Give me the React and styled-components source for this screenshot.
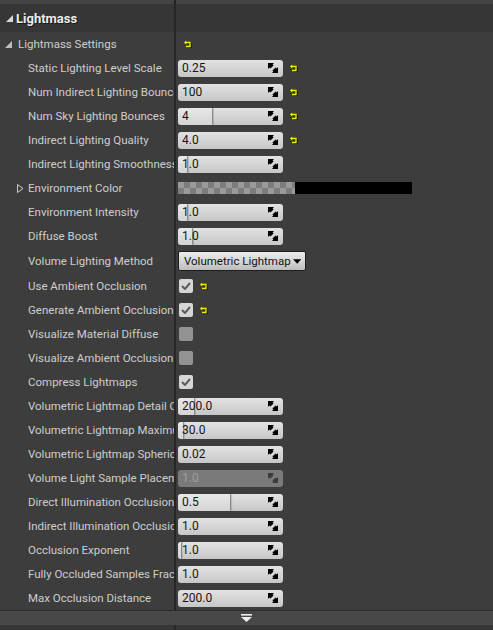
import React from "react";
import styled, { createGlobalStyle } from "styled-components";

const GlobalStyle = createGlobalStyle`
  html, body {
    margin: 0;
    padding: 0;
    background: #3d3d3d;
  }
  body {
    font-family: Roboto, "Noto Sans", "Liberation Sans", sans-serif;
  }
`;

const rows = [
  { label: "Static Lighting Level Scale", type: "num", value: "0.25", reset: true },
  { label: "Num Indirect Lighting Bounces", type: "num", value: "100", reset: true },
  { label: "Num Sky Lighting Bounces", type: "num", value: "4", fill: 34, reset: true },
  { label: "Indirect Lighting Quality", type: "num", value: "4.0", reset: true },
  { label: "Indirect Lighting Smoothness", type: "num", value: "1.0", fill: 9 },
  { label: "Environment Color", type: "color", expandable: true },
  { label: "Environment Intensity", type: "num", value: "1.0", fill: 9 },
  { label: "Diffuse Boost", type: "num", value: "1.0", fill: 14 },
  { label: "Volume Lighting Method", type: "combo", value: "Volumetric Lightmap" },
  { label: "Use Ambient Occlusion", type: "check", checked: true, reset: true },
  { label: "Generate Ambient Occlusion Material", type: "check", checked: true, reset: true },
  { label: "Visualize Material Diffuse", type: "check", checked: false },
  { label: "Visualize Ambient Occlusion", type: "check", checked: false },
  { label: "Compress Lightmaps", type: "check", checked: true },
  { label: "Volumetric Lightmap Detail Cell Size", type: "num", value: "200.0", fill: 16 },
  { label: "Volumetric Lightmap Maximum Brick Memory Mb", type: "num", value: "30.0", fill: 5 },
  { label: "Volumetric Lightmap Spherical Harmonic Smoothing", type: "num", value: "0.02" },
  { label: "Volume Light Sample Placement Scale", type: "num", value: "1.0", disabled: true },
  { label: "Direct Illumination Occlusion Fraction", type: "num", value: "0.5", fill: 52 },
  { label: "Indirect Illumination Occlusion Fraction", type: "num", value: "1.0" },
  { label: "Occlusion Exponent", type: "num", value: "1.0", fill: 3 },
  { label: "Fully Occluded Samples Fraction", type: "num", value: "1.0" },
  { label: "Max Occlusion Distance", type: "num", value: "200.0" },
];

const Panel = styled.div`
  width: 493px;
  height: 630px;
  background: #3d3d3d;
  display: flex;
  flex-direction: column;
  overflow: hidden;
`;

const TopStrip = styled.div`
  height: 4px;
  display: grid;
  grid-template-columns: 174px 1fr;
  background: #434343;
  & > div + div {
    border-left: 2px solid #242424;
  }
`;

const Grid = styled.div`
  display: grid;
  grid-template-columns: 174px 1fr;
  height: ${(p) => p.$h || 24}px;
  background: ${(p) => p.$bg || "transparent"};
`;

const NameCell = styled.div`
  display: flex;
  align-items: center;
  padding-left: ${(p) => p.$indent}px;
  overflow: hidden;
  white-space: nowrap;
  color: ${(p) => p.$color || "#cdcdcd"};
  font-size: ${(p) => p.$size || 11.5}px;
  font-weight: ${(p) => (p.$bold ? 700 : 400)};
  text-shadow: ${(p) => (p.$bold ? "1px 1px 0 #1a1a1a" : "none")};
`;

const ValueCell = styled.div`
  display: flex;
  align-items: center;
  gap: 7px;
  border-left: 2px solid #262626;
  padding-left: 2px;
`;

const Arrow = styled.span`
  width: ${(p) => p.$w || 10}px;
  display: flex;
  align-items: center;
  flex-shrink: 0;
`;

const NumBox = styled.div`
  position: relative;
  width: 105px;
  height: 17px;
  border-radius: 3px;
  background: ${(p) =>
    p.$disabled ? "#7a7a7a" : "linear-gradient(#e2e2e2, #d2d2d2 60%, #c6c6c6)"};
  display: flex;
  align-items: center;
  justify-content: space-between;
  padding: 0 5px 0 4px;
  box-sizing: border-box;
  overflow: hidden;
  font-size: 12px;
  color: ${(p) => (p.$disabled ? "#9e9e9e" : "#151515")};
`;

const SliderFill = styled.div`
  position: absolute;
  left: 0;
  top: 0;
  bottom: 0;
  background: linear-gradient(#e8e8e8, #d4d4d4);
  border-right: 1px solid #8a8a8a;
  border-radius: 3px 1px 1px 3px;
  box-shadow: 1px 0 1px rgba(0, 0, 0, 0.15);
`;

const NumText = styled.span`
  position: relative;
`;

const SpinIcon = styled.svg`
  position: relative;
  width: 10px;
  height: 10px;
`;

const Swatch = styled.div`
  display: flex;
  height: 12px;
  width: 234px;
`;

const Checker = styled.div`
  width: 117px;
  background-color: #9a9a9a;
  background-image: linear-gradient(45deg, #7d7d7d 25%, transparent 25%, transparent 75%, #7d7d7d 75%),
    linear-gradient(45deg, #7d7d7d 25%, transparent 25%, transparent 75%, #7d7d7d 75%);
  background-size: 12px 12px;
  background-position: 0 0, 6px 6px;
`;

const SolidColor = styled.div`
  flex: 1;
  background: #000;
`;

const Combo = styled.div`
  width: 128px;
  height: 20px;
  box-sizing: border-box;
  border: 1px solid #1e1e1e;
  border-radius: 2px;
  background: linear-gradient(#ececec, #d4d4d4 55%, #bcbcbc);
  display: flex;
  align-items: center;
  gap: 2px;
  padding: 0 4px 0 5px;
  font-size: 11.5px;
  white-space: nowrap;
  overflow: hidden;
  color: #111;
`;

const Check = styled.div`
  width: 14px;
  height: 14px;
  margin-left: 1px;
  border-radius: 2px;
  background: ${(p) => (p.$on ? "#d6d6d6" : "#939393")};
  display: flex;
  align-items: center;
  justify-content: center;
`;

const ExpandBar = styled.div`
  height: 14px;
  border-top: 1px solid #2b2b2b;
  background: #484848;
  display: flex;
  align-items: center;
  justify-content: center;
`;

const Footer = styled(Grid)`
  flex: 1;
`;

function ResetIcon() {
  return (
    <svg width="9" height="8" viewBox="0 0 9 8">
      <g fill="none" stroke="#1a1a00" strokeWidth="1.4" transform="translate(1 1)">
        <path d="M2 2.5H6V6.5H2" />
      </g>
      <path d="M2 2.5H6V6.5H2" fill="none" stroke="#f2f200" strokeWidth="1.3" />
      <path d="M0 2.5L2.2 0.5V4.5Z" fill="#f2f200" />
    </svg>
  );
}

// spin-box drag handle: two diagonal arrow heads
function Spin({ color }) {
  return (
    <SpinIcon viewBox="0 0 10 10">
      <path d="M0 0H6L4.6 1.4L5.6 2.4L2.4 5.6L1.4 4.6L0 6Z" fill={color} />
      <path d="M10 10H4L5.4 8.6L4.4 7.6L7.6 4.4L8.6 5.4L10 4Z" fill={color} />
    </SpinIcon>
  );
}

function Tri({ color = "#bdbdbd" }) {
  return (
    <svg width="7" height="7" viewBox="0 0 7 7">
      <path d="M7 0V7H0Z" fill={color} />
    </svg>
  );
}

function OutlineTri() {
  return (
    <svg width="7" height="9" viewBox="0 0 7 9">
      <path d="M0.5 0.5L6 4.5L0.5 8.5Z" fill="none" stroke="#cfcfcf" strokeWidth="1" />
    </svg>
  );
}

function Value({ row }) {
  if (row.type === "num") {
    return (
      <NumBox $disabled={row.disabled}>
        {row.fill ? <SliderFill style={{ width: row.fill }} /> : null}
        <NumText>{row.value}</NumText>
        <Spin color={row.disabled ? "#3c3c3c" : "#000"} />
      </NumBox>
    );
  }
  if (row.type === "color") {
    return (
      <Swatch>
        <Checker />
        <SolidColor />
      </Swatch>
    );
  }
  if (row.type === "combo") {
    return (
      <Combo>
        <span>{row.value}</span>
        <svg width="9" height="5" viewBox="0 0 9 5">
          <path d="M0 0H9L4.5 5Z" fill="#000" />
        </svg>
      </Combo>
    );
  }
  return (
    <Check $on={row.checked}>
      {row.checked && (
        <svg width="10" height="8" viewBox="0 0 10 8">
          <path d="M1 4L4 7L9 1" fill="none" stroke="#5c5c5c" strokeWidth="2" />
        </svg>
      )}
    </Check>
  );
}

export default function App() {
  return (
    <>
      <GlobalStyle />
      <Panel>
        <TopStrip>
          <div />
          <div />
        </TopStrip>
        <Grid $h={28} $bg="#363636">
          <NameCell $indent={6} $bold $size={13} $color="#ececec">
            <Arrow>
              <Tri color="#d8d8d8" />
            </Arrow>
            Lightmass
          </NameCell>
          <ValueCell />
        </Grid>
        <Grid>
          <NameCell $indent={5}>
            <Arrow $w={13}>
              <Tri />
            </Arrow>
            Lightmass Settings
          </NameCell>
          <ValueCell style={{ paddingLeft: 8 }}>
            <ResetIcon />
          </ValueCell>
        </Grid>
        {rows.map((row) => (
          <Grid key={row.label} $h={row.type === "combo" ? 26 : 24}>
            <NameCell $indent={row.expandable ? 17 : 28}>
              {row.expandable && (
                <Arrow $w={11}>
                  <OutlineTri />
                </Arrow>
              )}
              {row.label}
            </NameCell>
            <ValueCell>
              <Value row={row} />
              {row.reset && <ResetIcon />}
            </ValueCell>
          </Grid>
        ))}
        <ExpandBar>
          <svg width="11" height="8" viewBox="0 0 11 8">
            <rect x="0" y="0" width="11" height="1.6" fill="#eee" />
            <path d="M0 3H11L5.5 8Z" fill="#eee" />
          </svg>
        </ExpandBar>
        <Footer $bg="#363636">
          <div />
          <ValueCell />
        </Footer>
      </Panel>
    </>
  );
}
